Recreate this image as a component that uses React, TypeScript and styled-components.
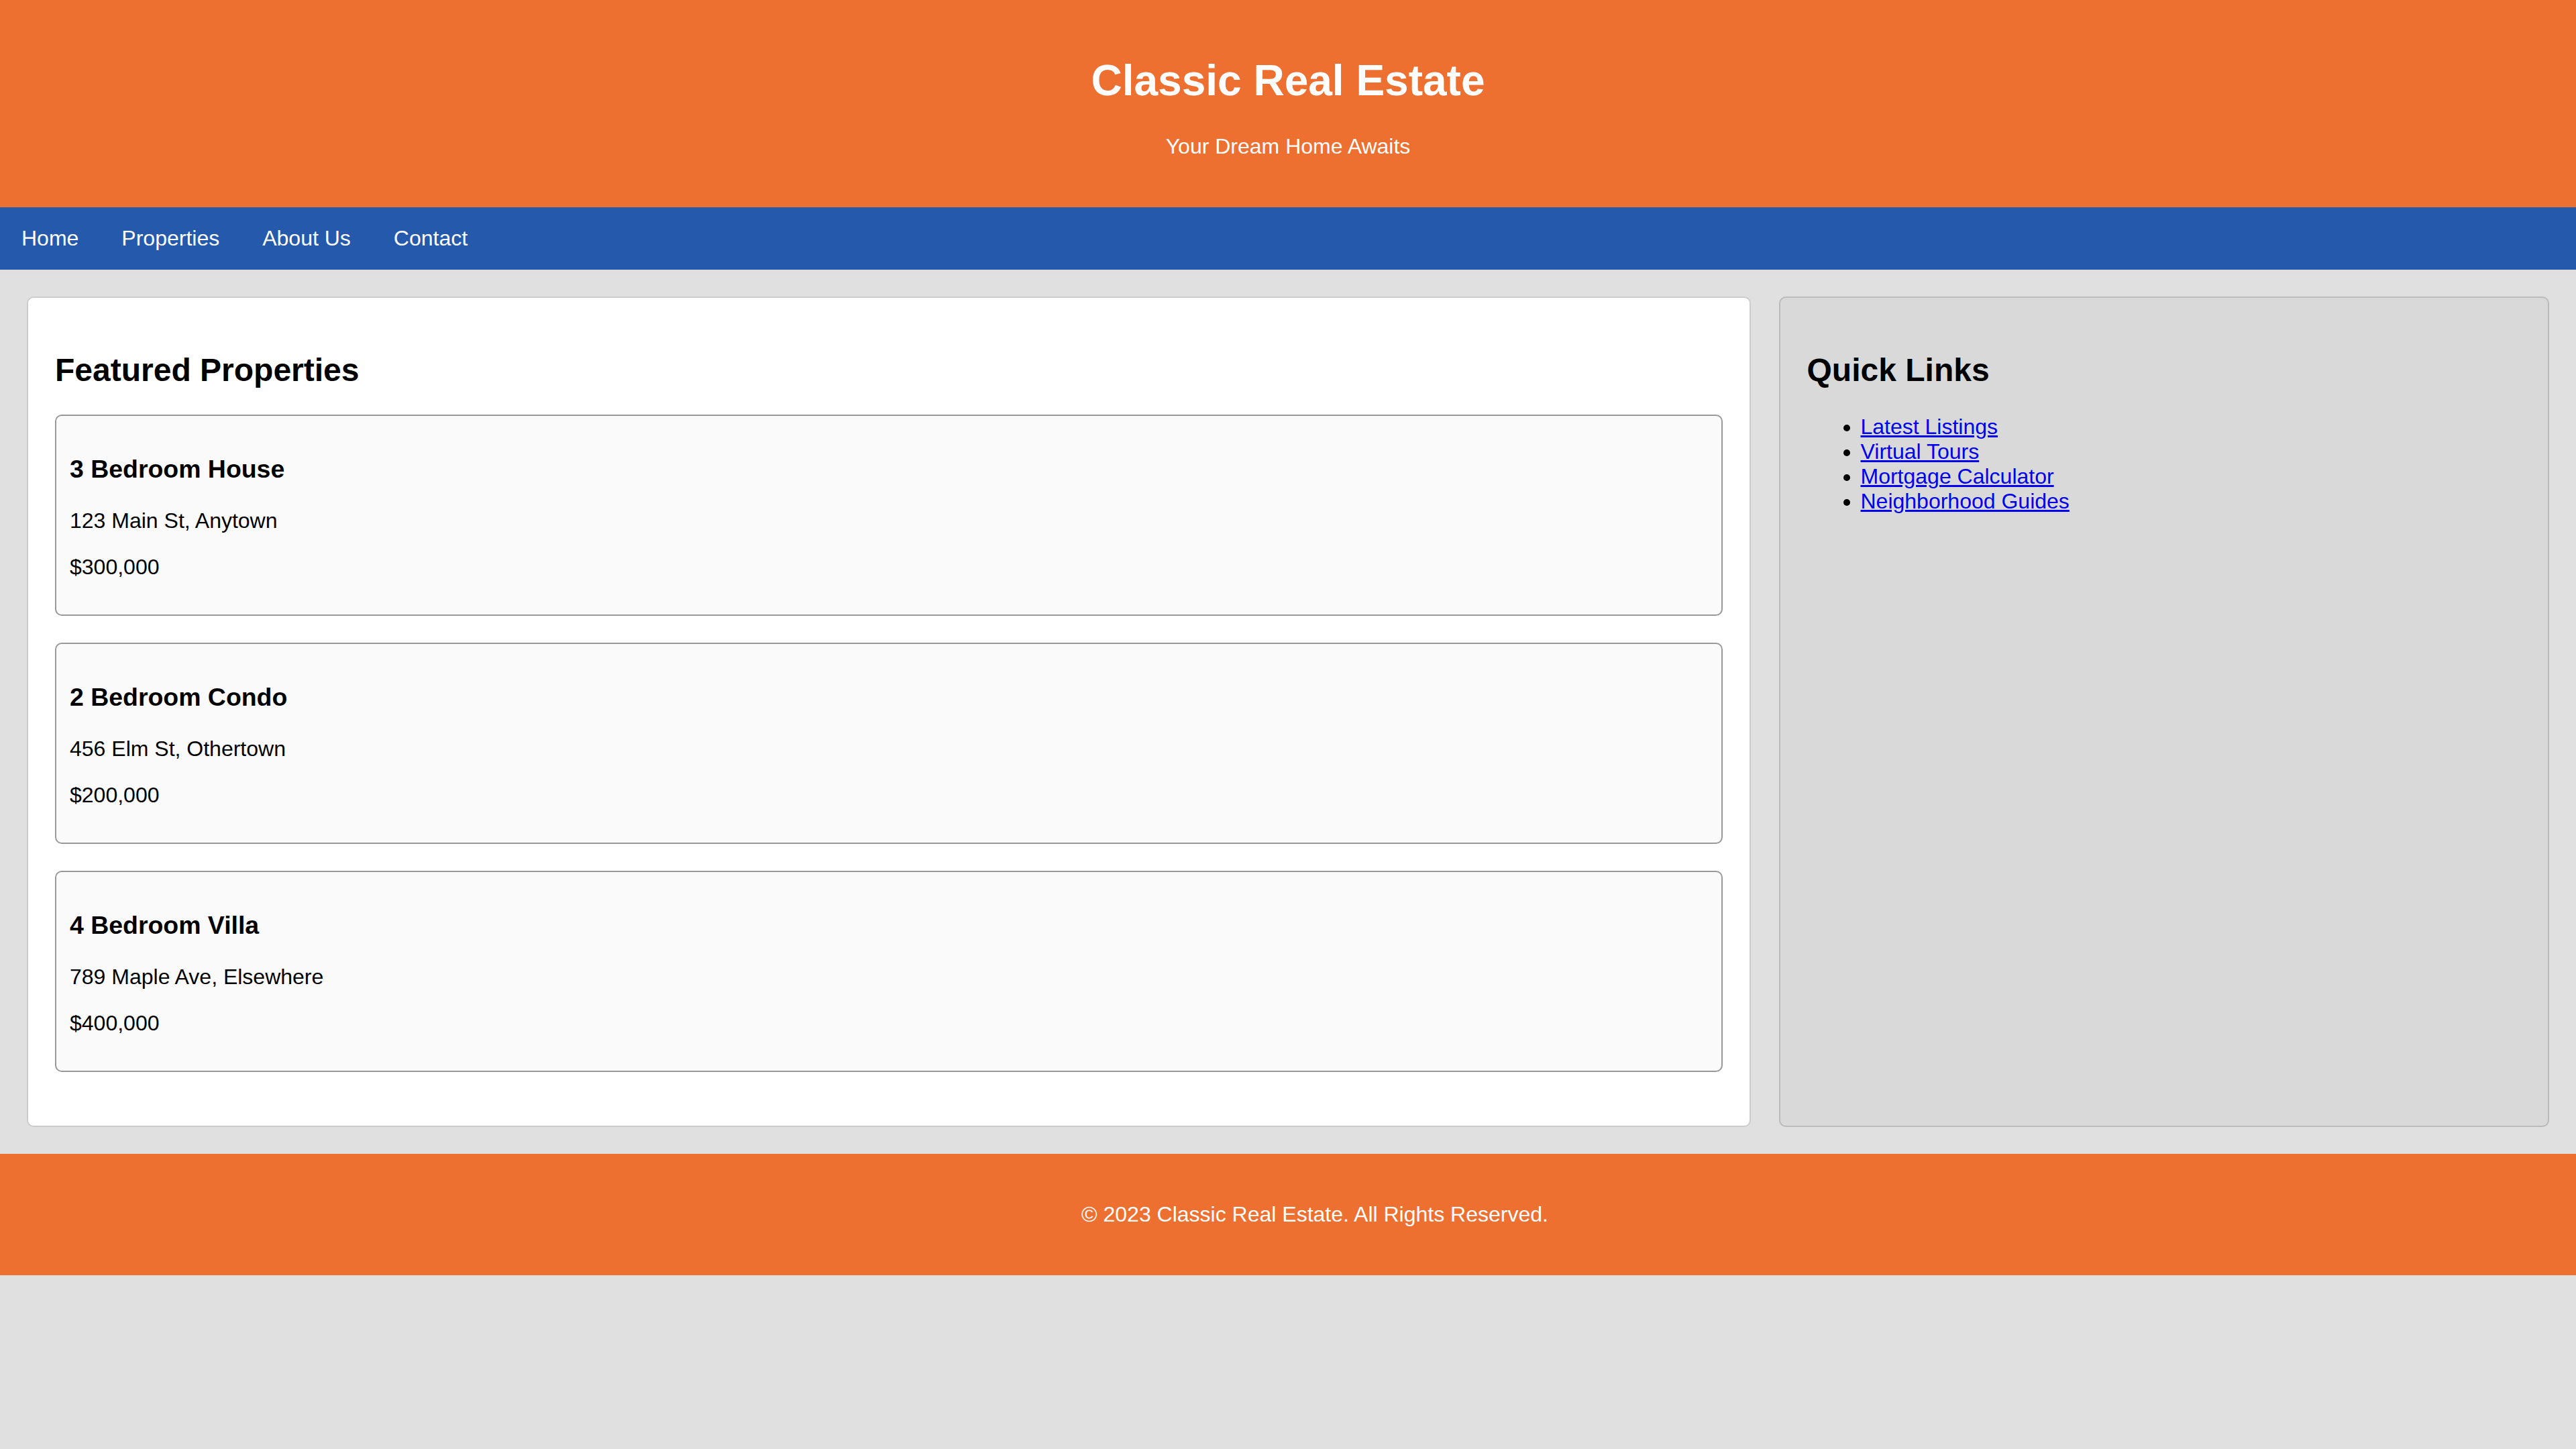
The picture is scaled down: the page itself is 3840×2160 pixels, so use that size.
import React from "react";
import styled, { createGlobalStyle } from "styled-components";

const GlobalStyle = createGlobalStyle`
  html, body {
    margin: 0;
    padding: 0;
  }
  body {
    background: #e0e0e0;
    color: #000;
    font-family: "Liberation Sans", Arial, Helvetica, sans-serif;
  }
`;

const Header = styled.header`
  background: #ed7030;
  color: #fff;
  text-align: center;
  padding: 40px;
`;

const Title = styled.h1`
  font-size: 64px;
  font-weight: bold;
  margin: 42.88px 0;
`;

const Tagline = styled.p`
  font-size: 32px;
  margin: 32px 0;
`;

const Nav = styled.nav`
  background: #2559ac;
  display: flex;
`;

const NavLink = styled.a`
  display: block;
  padding: 28px 32px;
  color: #fff;
  font-size: 32px;
  text-decoration: none;
`;

const Container = styled.div`
  display: grid;
  grid-template-columns: minmax(0, 2569.5fr) minmax(0, 1148.5fr);
  gap: 42px;
  padding: 40px;
`;

const Panel = styled.section<{ $tone: "main" | "side" }>`
  background: ${(p) => (p.$tone === "main" ? "#ffffff" : "#d9d9d9")};
  border: 2px solid ${(p) => (p.$tone === "main" ? "#cccccc" : "#bbbbbb")};
  border-radius: 10px;
  padding: 40px;
`;

const SectionTitle = styled.h2`
  font-size: 48px;
  font-weight: bold;
  margin: 39.84px 0;
`;

const Card = styled.div`
  background: #fafafa;
  border: 2px solid #999999;
  border-radius: 10px;
  padding: 20px;
  margin-bottom: 40px;
`;

const CardTitle = styled.h3`
  font-size: 37.44px;
  font-weight: bold;
  margin: 37.44px 0;
`;

const CardText = styled.p`
  font-size: 32px;
  margin: 32px 0;
`;

const LinkList = styled.ul`
  margin: 32px 0;
  padding-left: 80px;
  font-size: 32px;
  list-style: disc;
`;

const LinkItem = styled.li`
  line-height: normal;
`;

const QuickLink = styled.a`
  color: #0000ee;
  text-decoration: underline;
`;

const Footer = styled.footer`
  background: #ed7030;
  color: #fff;
  text-align: center;
  padding: 40px 40px 40px 120px;
`;

const FooterText = styled.p`
  font-size: 32px;
  margin: 32px 0;
`;

const properties = [
  { title: "3 Bedroom House", address: "123 Main St, Anytown", price: "$300,000" },
  { title: "2 Bedroom Condo", address: "456 Elm St, Othertown", price: "$200,000" },
  { title: "4 Bedroom Villa", address: "789 Maple Ave, Elsewhere", price: "$400,000" },
];

const links = ["Latest Listings", "Virtual Tours", "Mortgage Calculator", "Neighborhood Guides"];

export default function App() {
  return (
    <>
      <GlobalStyle />
      <Header>
        <Title>Classic Real Estate</Title>
        <Tagline>Your Dream Home Awaits</Tagline>
      </Header>
      <Nav>
        <NavLink href="#">Home</NavLink>
        <NavLink href="#">Properties</NavLink>
        <NavLink href="#">About Us</NavLink>
        <NavLink href="#">Contact</NavLink>
      </Nav>
      <Container>
        <Panel $tone="main">
          <SectionTitle>Featured Properties</SectionTitle>
          {properties.map((p) => (
            <Card key={p.title}>
              <CardTitle>{p.title}</CardTitle>
              <CardText>{p.address}</CardText>
              <CardText>{p.price}</CardText>
            </Card>
          ))}
        </Panel>
        <Panel $tone="side">
          <SectionTitle>Quick Links</SectionTitle>
          <LinkList>
            {links.map((l) => (
              <LinkItem key={l}>
                <QuickLink href="#">{l}</QuickLink>
              </LinkItem>
            ))}
          </LinkList>
        </Panel>
      </Container>
      <Footer>
        <FooterText>© 2023 Classic Real Estate. All Rights Reserved.</FooterText>
      </Footer>
    </>
  );
}
